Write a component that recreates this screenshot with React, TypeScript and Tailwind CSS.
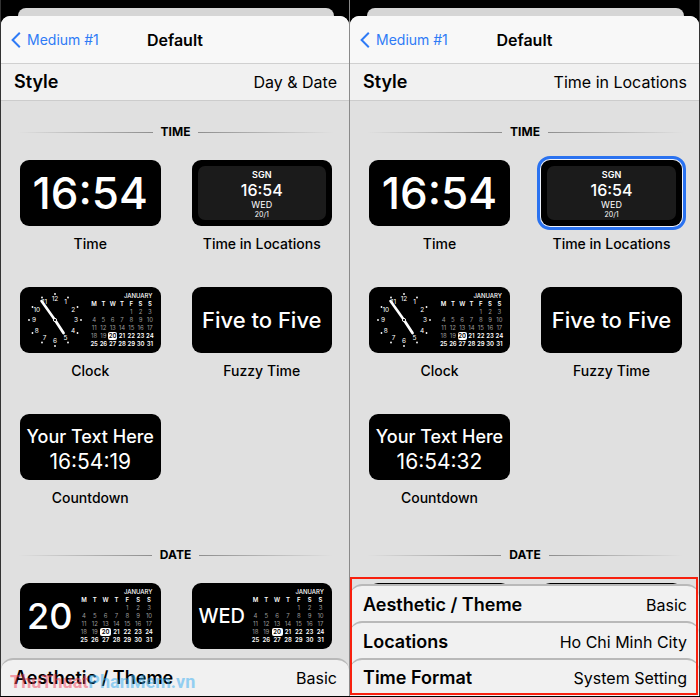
import type { ReactNode } from "react"

const weekDays = ["M", "T", "W", "T", "F", "S", "S"]
const weeks = [
  [0, 0, 0, 0, 1, 2, 3],
  [4, 5, 6, 7, 8, 9, 10],
  [11, 12, 13, 14, 15, 16, 17],
  [18, 19, 20, 21, 22, 23, 24],
  [25, 26, 27, 28, 29, 30, 31],
]
const today = 20

function dayClass(day: number) {
  if (day === today) return "block rounded-[2px] bg-white font-semibold text-black"
  if (day > today) return "block font-semibold text-white"
  return "block text-[#9a9a9a]"
}

function Calendar({ className }: { className: string }) {
  return (
    <div className={className}>
      <table className="w-full table-fixed border-collapse text-center text-[6px] leading-[8px] text-white">
        <caption className="pr-[2px] text-right font-medium">JANUARY</caption>
        <thead>
          <tr>
            {weekDays.map((d, i) => (
              <th key={i} className="p-0 font-semibold">
                {d}
              </th>
            ))}
          </tr>
        </thead>
        <tbody>
          {weeks.map((week, i) => (
            <tr key={i}>
              {week.map((day, j) => (
                <td key={j} className="p-0">
                  {day > 0 && <span className={dayClass(day)}>{day}</span>}
                </td>
              ))}
            </tr>
          ))}
        </tbody>
      </table>
    </div>
  )
}

function ClockFace() {
  const hours = [1, 2, 3, 4, 5, 6, 7, 8, 9, 10, 11, 12]
  return (
    <svg className="size-[58px] shrink-0" viewBox="0 0 58 58" role="img" aria-label="Clock">
      {hours.map((h) => {
        const a = (h * Math.PI) / 6
        return (
          <g key={h} fill="white">
            <circle cx={29 + 26 * Math.sin(a)} cy={29 - 26 * Math.cos(a)} r="0.9" />
            <text
              x={29 + 21 * Math.sin(a)}
              y={31.3 - 21 * Math.cos(a)}
              fontSize="6.5"
              textAnchor="middle"
            >
              {h}
            </text>
          </g>
        )
      })}
      <g stroke="white" strokeLinecap="round">
        <path d="M29 29 L15.5 10" strokeWidth="2.6" />
        <path d="M29 29 L37.5 42" strokeWidth="2.8" />
      </g>
      <circle cx="29" cy="29" r="1.6" fill="black" stroke="white" strokeWidth="1" />
    </svg>
  )
}

function StyleCard({
  group,
  name,
  label,
  selected = false,
  children,
}: {
  group: string
  name: string
  label?: string
  selected?: boolean
  children: ReactNode
}) {
  return (
    <label className="relative block">
      <input type="radio" name={group} aria-label={name} defaultChecked={selected} className="sr-only" />
      <div
        className={
          selected
            ? "flex h-[66px] items-center justify-center overflow-hidden rounded-[9px] bg-black text-white ring-1 ring-[#eef2fb] outline-[3px] outline-offset-1 outline-[#2a72f0]"
            : "flex h-[66px] items-center justify-center overflow-hidden rounded-[9px] bg-black text-white"
        }
      >
        {children}
      </div>
      {label && (
        <div className="mt-2 text-center text-sm leading-5 font-medium whitespace-nowrap">{label}</div>
      )}
    </label>
  )
}

function SectionTitle({ children }: { children: ReactNode }) {
  return (
    <div className="flex items-center gap-2 pr-4 pl-[17px]">
      <div className="h-px flex-1 bg-linear-to-r from-transparent to-[#8e8e8e]" />
      <h2 className="text-xs leading-4 font-bold">{children}</h2>
      <div className="h-px flex-1 bg-linear-to-l from-transparent to-[#8e8e8e]" />
    </div>
  )
}

function SheetRow({ label, value }: { label: string; value: string }) {
  return (
    <button
      type="button"
      className="relative -mt-3 flex h-[49px] w-full items-center justify-between rounded-t-[12px] border-t-2 border-[#b9b9b9] bg-[#f1f1f1] pr-3 pb-[10px] pl-[13px] last:h-[38px] last:pb-0"
    >
      <span className="text-lg leading-6 font-semibold">{label}</span>
      <span className="text-base leading-6">{value}</span>
    </button>
  )
}

function Phone({
  id,
  style,
  countdown,
  selected,
  rows,
}: {
  id: string
  style: string
  countdown: string
  selected?: string
  rows: { label: string; value: string }[]
}) {
  const time = id + "-time"
  const date = id + "-date"
  return (
    <div className="flex h-full flex-col overflow-hidden bg-black pt-2">
      <div className="mr-[15px] ml-[17px] h-2 shrink-0 rounded-t-[8px] bg-[#d6d6d6]" />
      <div className="flex min-h-0 flex-1 flex-col overflow-hidden rounded-t-[9px] bg-[#e0e0e0]">
        <header className="grid h-12 shrink-0 grid-cols-3 items-center border-b border-[#d0d0d0] bg-[#f8f8f8] px-[10px]">
          <button type="button" className="flex items-center gap-[6px] text-sm text-[#2f7bf6]">
            <svg className="h-4 w-[10px]" viewBox="0 0 10 16" fill="none" stroke="currentColor" strokeWidth="2">
              <path d="M8.8 0.8 L1.6 8 L8.8 15.2" />
            </svg>
            <span className="whitespace-nowrap">Medium #1</span>
          </button>
          <h1 className="text-center text-base font-semibold">Default</h1>
        </header>
        <button
          type="button"
          className="flex h-[37px] w-full shrink-0 items-center justify-between border-b border-[#cccccc] bg-[#f1f1f1] pr-3 pl-[13px]"
        >
          <span className="text-lg leading-6 font-semibold">Style</span>
          <span className="text-base leading-6">{style}</span>
        </button>

        <main className="min-h-0 flex-1 overflow-hidden pt-[23px]">
          <SectionTitle>TIME</SectionTitle>
          <div className="grid grid-cols-2 gap-x-[31px] gap-y-[33px] pt-5 pr-[17px] pl-[19px]">
            <StyleCard group={time} name="Time" label="Time">
              <span className="text-[44px] leading-none font-medium">16:54</span>
            </StyleCard>
            <StyleCard
              group={time}
              name="Time in Locations"
              label="Time in Locations"
              selected={selected === "Time in Locations"}
            >
              <div className="mx-[6px] flex h-[54px] flex-1 flex-col items-center justify-center rounded-[7px] bg-[#1b1b1b] pt-px">
                <span className="text-[9px] leading-[12px] font-semibold">SGN</span>
                <span className="text-base leading-[18px] font-medium">16:54</span>
                <span className="text-[9px] leading-[11px]">WED</span>
                <span className="text-[7px] leading-[9px]">20/1</span>
              </div>
            </StyleCard>
            <StyleCard group={time} name="Clock" label="Clock">
              <div className="flex w-full items-center justify-between px-[6px]">
                <ClockFace />
                <Calendar className="w-[65px]" />
              </div>
            </StyleCard>
            <StyleCard group={time} name="Fuzzy Time" label="Fuzzy Time">
              <span className="text-[22px] leading-none font-medium whitespace-nowrap">Five to Five</span>
            </StyleCard>
            <StyleCard group={time} name="Countdown" label="Countdown">
              <div className="pt-[3px] text-center leading-[25px] whitespace-nowrap">
                <div className="text-lg leading-[25px] font-medium">Your Text Here</div>
                <div className="text-[21px] leading-[25px]">{countdown}</div>
              </div>
            </StyleCard>
          </div>

          <div className="pt-[39px]">
            <SectionTitle>DATE</SectionTitle>
          </div>
          <div className="grid grid-cols-2 gap-x-[31px] pt-5 pr-[17px] pl-[19px]">
            <StyleCard group={date} name="Day">
              <div className="flex w-full items-center justify-between pr-[6px] pl-[7px]">
                <span className="text-[36px] leading-none font-medium">20</span>
                <Calendar className="w-[76px]" />
              </div>
            </StyleCard>
            <StyleCard group={date} name="Weekday">
              <div className="flex w-full items-center justify-between pr-[6px] pl-[7px]">
                <span className="text-[20px] leading-none font-medium">WED</span>
                <Calendar className="w-[76px]" />
              </div>
            </StyleCard>
          </div>
        </main>

        <div className="shrink-0">
          {rows.map((row) => (
            <SheetRow key={row.label} label={row.label} value={row.value} />
          ))}
        </div>
      </div>
    </div>
  )
}

export default function App() {
  return (
    <div className="grid h-screen grid-cols-2 overflow-hidden bg-black pb-px font-['Inter','Liberation_Sans',sans-serif] text-black">
      <div className="relative min-h-0 border-r border-l border-r-[#8a8a8a] border-l-[#333333]">
        <Phone
          id="left"
          style="Day & Date"
          countdown="16:54:19"
          rows={[{ label: "Aesthetic / Theme", value: "Basic" }]}
        />
        <div className="pointer-events-none absolute bottom-0 left-[9px] font-['Roboto','Liberation_Sans',sans-serif] text-lg leading-7 font-bold whitespace-nowrap opacity-50">
          <span className="text-[#f5465f]">ThuThuat</span>
          <span className="text-[#35adf2]">PhanMem.vn</span>
        </div>
      </div>
      <div className="relative min-h-0 border-r border-[#333333]">
        <Phone
          id="right"
          style="Time in Locations"
          countdown="16:54:32"
          selected="Time in Locations"
          rows={[
            { label: "Aesthetic / Theme", value: "Basic" },
            { label: "Locations", value: "Ho Chi Minh City" },
            { label: "Time Format", value: "System Setting" },
          ]}
        />
        <div className="pointer-events-none absolute right-px bottom-px left-0 h-[118px] border-2 border-[#f8200e]" />
      </div>
    </div>
  )
}
